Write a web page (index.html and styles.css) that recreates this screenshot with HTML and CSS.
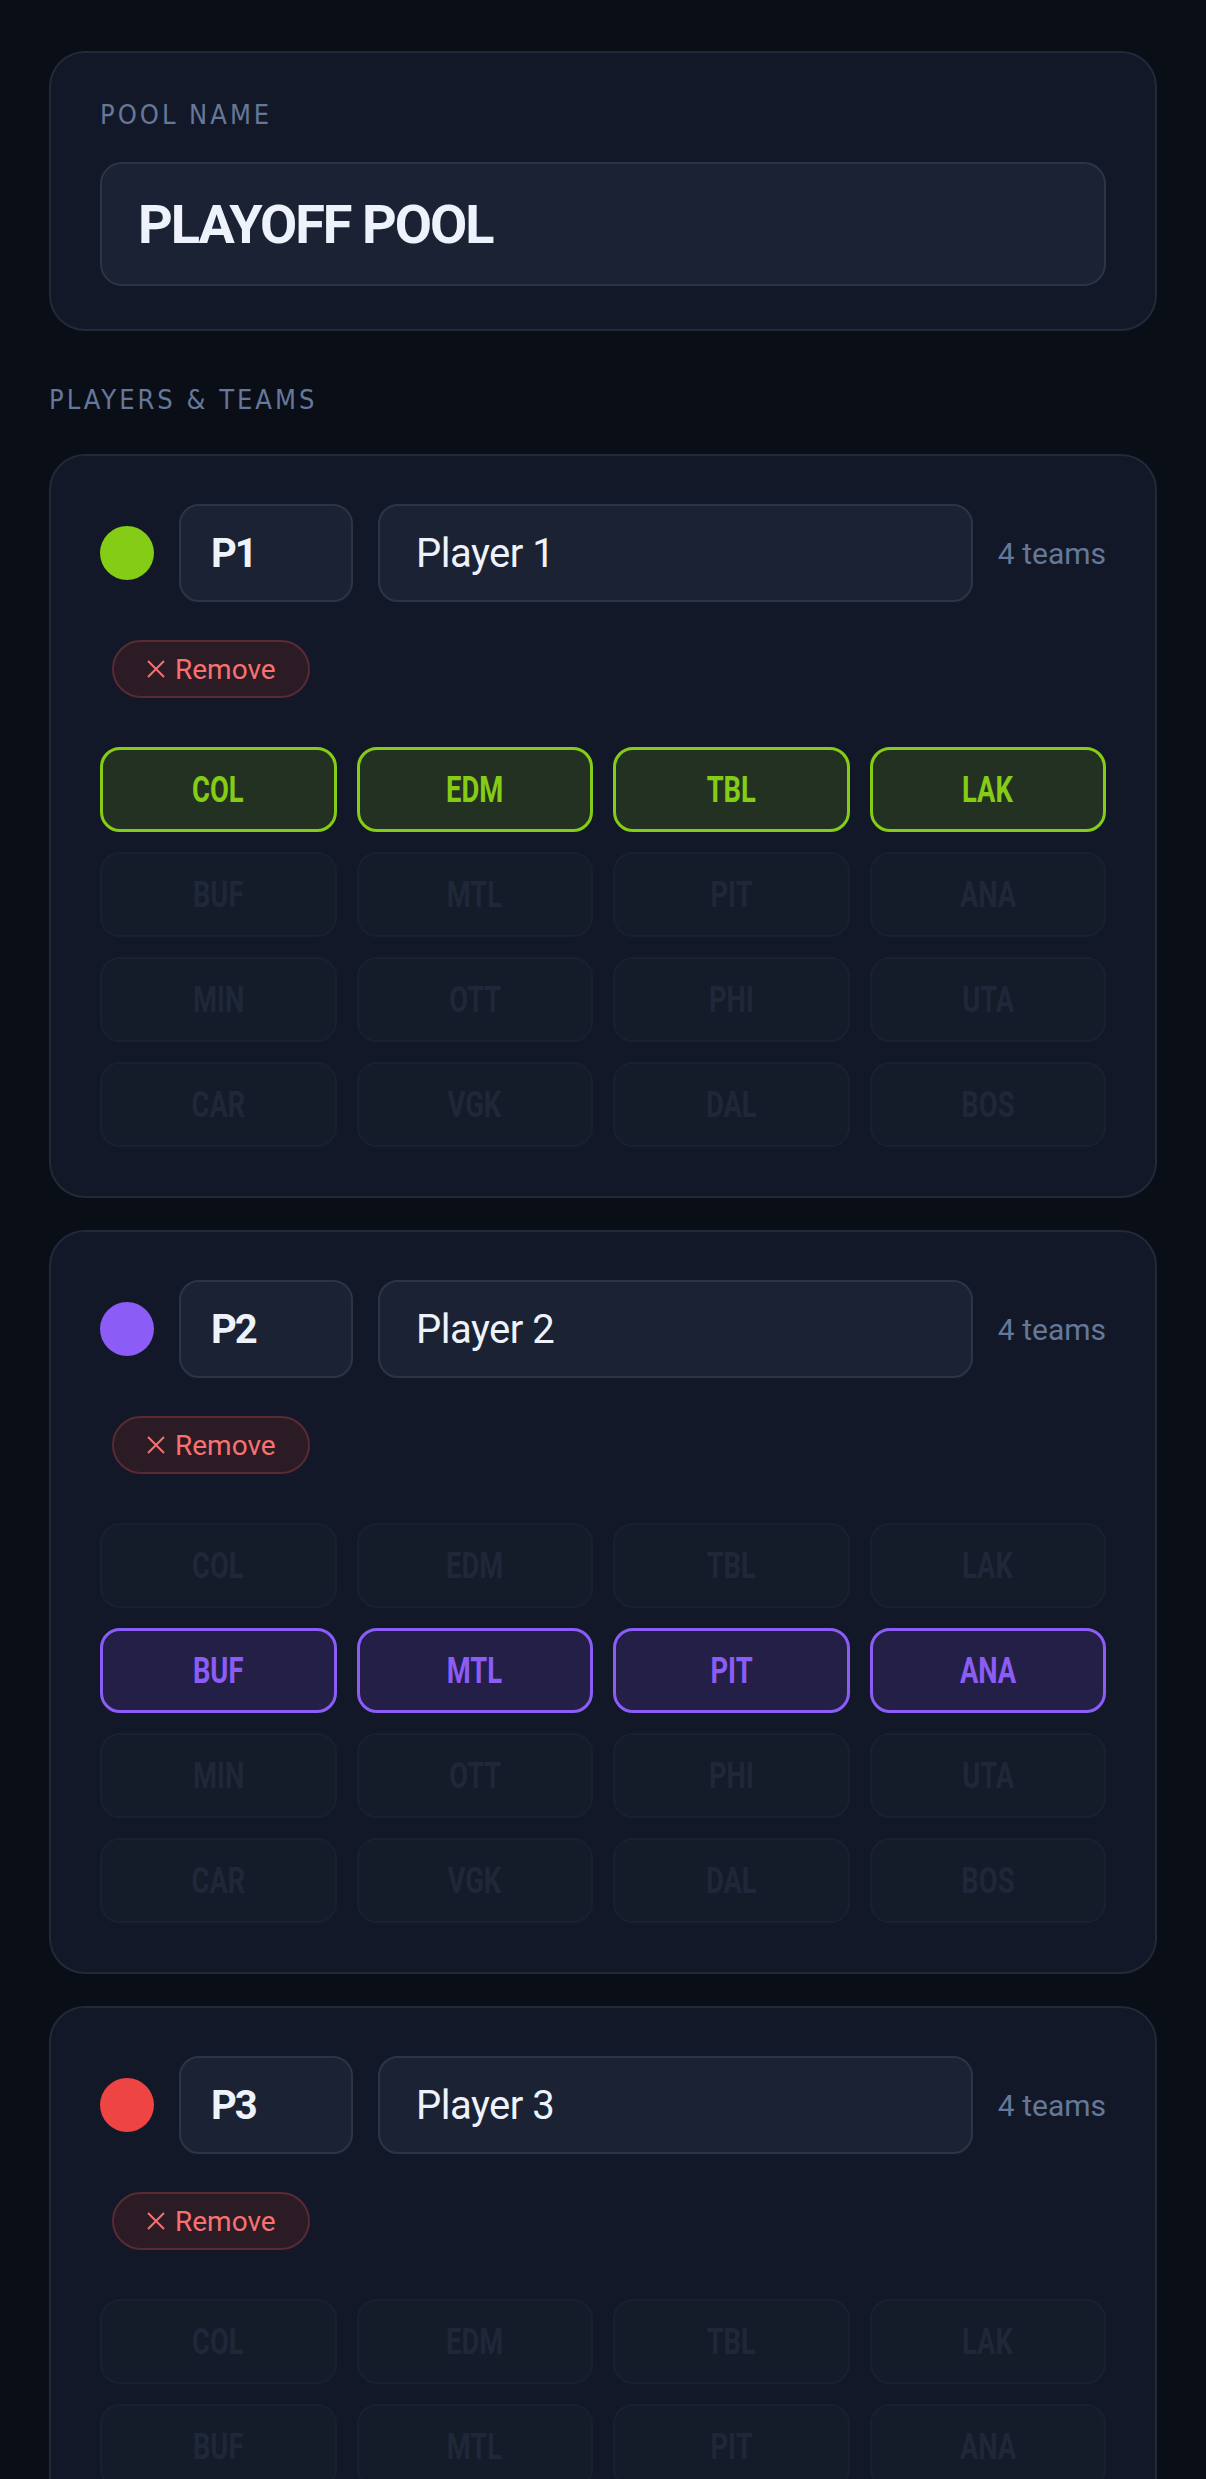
FILE: index.html
```html
<!DOCTYPE html>
<html lang="en">
<head>
    <meta charset="UTF-8">
    <meta name="viewport" content="width=device-width, initial-scale=1.0">
    <title>Playoff Pool</title>
    <link rel="stylesheet" href="styles.css">
</head>
<body>
    <div class="page">
        <section class="pool-card">
            <label class="caps-label" for="pool-name">Pool Name</label>
            <input class="pool-input" id="pool-name" type="text" value="PLAYOFF POOL">
        </section>

        <h2 class="caps-label section-label">Players &amp; Teams</h2>

        <!-- player 1 -->
        <section class="player-card">
            <div class="player-head">
                <span class="dot dot-lime"></span>
                <input class="short-input" type="text" value="P1">
                <input class="name-input" type="text" value="Player 1">
                <span class="team-count">4 teams</span>
            </div>
            <button class="remove-btn">
                <svg width="22" height="22" viewBox="0 0 22 22"><path d="M3 3 L19 19 M19 3 L3 19" stroke="currentColor" stroke-width="2" fill="none"/></svg>
                Remove
            </button>
            <div class="team-grid">
                <button class="team picked-lime"><span>COL</span></button>
                <button class="team picked-lime"><span>EDM</span></button>
                <button class="team picked-lime"><span>TBL</span></button>
                <button class="team picked-lime"><span>LAK</span></button>
                <button class="team"><span>BUF</span></button>
                <button class="team"><span>MTL</span></button>
                <button class="team"><span>PIT</span></button>
                <button class="team"><span>ANA</span></button>
                <button class="team"><span>MIN</span></button>
                <button class="team"><span>OTT</span></button>
                <button class="team"><span>PHI</span></button>
                <button class="team"><span>UTA</span></button>
                <button class="team"><span>CAR</span></button>
                <button class="team"><span>VGK</span></button>
                <button class="team"><span>DAL</span></button>
                <button class="team"><span>BOS</span></button>
            </div>
        </section>

        <!-- player 2 -->
        <section class="player-card">
            <div class="player-head">
                <span class="dot dot-violet"></span>
                <input class="short-input" type="text" value="P2">
                <input class="name-input" type="text" value="Player 2">
                <span class="team-count">4 teams</span>
            </div>
            <button class="remove-btn">
                <svg width="22" height="22" viewBox="0 0 22 22"><path d="M3 3 L19 19 M19 3 L3 19" stroke="currentColor" stroke-width="2" fill="none"/></svg>
                Remove
            </button>
            <div class="team-grid">
                <button class="team"><span>COL</span></button>
                <button class="team"><span>EDM</span></button>
                <button class="team"><span>TBL</span></button>
                <button class="team"><span>LAK</span></button>
                <button class="team picked-violet"><span>BUF</span></button>
                <button class="team picked-violet"><span>MTL</span></button>
                <button class="team picked-violet"><span>PIT</span></button>
                <button class="team picked-violet"><span>ANA</span></button>
                <button class="team"><span>MIN</span></button>
                <button class="team"><span>OTT</span></button>
                <button class="team"><span>PHI</span></button>
                <button class="team"><span>UTA</span></button>
                <button class="team"><span>CAR</span></button>
                <button class="team"><span>VGK</span></button>
                <button class="team"><span>DAL</span></button>
                <button class="team"><span>BOS</span></button>
            </div>
        </section>

        <!-- player 3 -->
        <section class="player-card">
            <div class="player-head">
                <span class="dot dot-red"></span>
                <input class="short-input" type="text" value="P3">
                <input class="name-input" type="text" value="Player 3">
                <span class="team-count">4 teams</span>
            </div>
            <button class="remove-btn">
                <svg width="22" height="22" viewBox="0 0 22 22"><path d="M3 3 L19 19 M19 3 L3 19" stroke="currentColor" stroke-width="2" fill="none"/></svg>
                Remove
            </button>
            <div class="team-grid">
                <button class="team"><span>COL</span></button>
                <button class="team"><span>EDM</span></button>
                <button class="team"><span>TBL</span></button>
                <button class="team"><span>LAK</span></button>
                <button class="team"><span>BUF</span></button>
                <button class="team"><span>MTL</span></button>
                <button class="team"><span>PIT</span></button>
                <button class="team"><span>ANA</span></button>
                <button class="team picked-red"><span>MIN</span></button>
                <button class="team picked-red"><span>OTT</span></button>
                <button class="team picked-red"><span>PHI</span></button>
                <button class="team picked-red"><span>UTA</span></button>
                <button class="team"><span>CAR</span></button>
                <button class="team"><span>VGK</span></button>
                <button class="team"><span>DAL</span></button>
                <button class="team"><span>BOS</span></button>
            </div>
        </section>
    </div>
</body>
</html>
```

FILE: styles.css
```css
body {
    margin: 0;
    background-color: #0a0e17;
    color: #eef2fa;
    font-family: Roboto, "Liberation Sans", sans-serif;
}
.page {
    padding: 51px 49px 40px;
}
input, button {
    font: inherit;
    color: inherit;
}
.pool-card, .player-card {
    background-color: #121827;
    border: 2px solid #222a3a;
    border-radius: 36px;
}
.pool-card {
    display: flex;
    flex-direction: column;
    gap: 30px;
    padding: 45px 49px 43px;
}
.caps-label {
    display: block;
    margin: 0;
    font-family: "DejaVu Sans Condensed", "DejaVu Sans", sans-serif;
    font-weight: normal;
    font-size: 27px;
    line-height: 34px;
    letter-spacing: 3px;
    text-transform: uppercase;
    color: #66789a;
}
.section-label {
    margin: 52px 0 37px;
}
.pool-input {
    height: 124px;
    box-sizing: border-box;
    padding: 0 36px;
    background-color: #1a2234;
    border: 2px solid #2c3547;
    border-radius: 22px;
    font-weight: bold;
    font-size: 54px;
    letter-spacing: -2px;
    color: #eef2fa;
    outline: none;
}
.player-card {
    padding: 48px 49px 49px;
    margin-bottom: 32px;
}
.player-head {
    display: flex;
    align-items: center;
    gap: 25px;
}
.dot {
    width: 54px;
    height: 54px;
    border-radius: 50%;
    flex-shrink: 0;
}
.dot-lime { background-color: #84cc16; }
.dot-violet { background-color: #8b5cf6; }
.dot-red { background-color: #ef4444; }
.short-input, .name-input {
    height: 98px;
    box-sizing: border-box;
    background-color: #1a2234;
    border: 2px solid #2c3547;
    border-radius: 20px;
    outline: none;
    color: #eef2fa;
}
.short-input {
    width: 174px;
    padding: 0 30px;
    font-weight: bold;
    font-size: 40px;
    letter-spacing: -2px;
}
.name-input {
    flex: 1;
    min-width: 0;
    padding: 0 36px;
    font-size: 40px;
    letter-spacing: -0.5px;
}
.team-count {
    font-size: 30px;
    color: #66789a;
    white-space: nowrap;
}
.remove-btn {
    display: flex;
    align-items: center;
    gap: 8px;
    height: 58px;
    margin: 38px 0 49px 12px;
    padding: 0 32px 0 31px;
    background-color: #2a1b25;
    border: 2px solid #5a2a33;
    border-radius: 29px;
    color: #f87171;
    font-size: 28px;
    cursor: pointer;
}
.team-grid {
    display: grid;
    grid-template-columns: repeat(4, 1fr);
    gap: 20px;
}
.team {
    height: 85px;
    background-color: #141b29;
    border: 2px solid #192030;
    border-radius: 20px;
    font-weight: bold;
    font-size: 37px;
    color: #1f2839;
    cursor: pointer;
}
.team span {
    display: inline-block;
    transform: scaleX(0.74);
}
.picked-lime {
    background-color: #233123;
    border: 3px solid #84cc16;
    color: #84cc16;
}
.picked-violet {
    background-color: #241f47;
    border: 3px solid #8b5cf6;
    color: #8b5cf6;
}
.picked-red {
    background-color: #3a1d24;
    border: 3px solid #ef4444;
    color: #ef4444;
}
```
